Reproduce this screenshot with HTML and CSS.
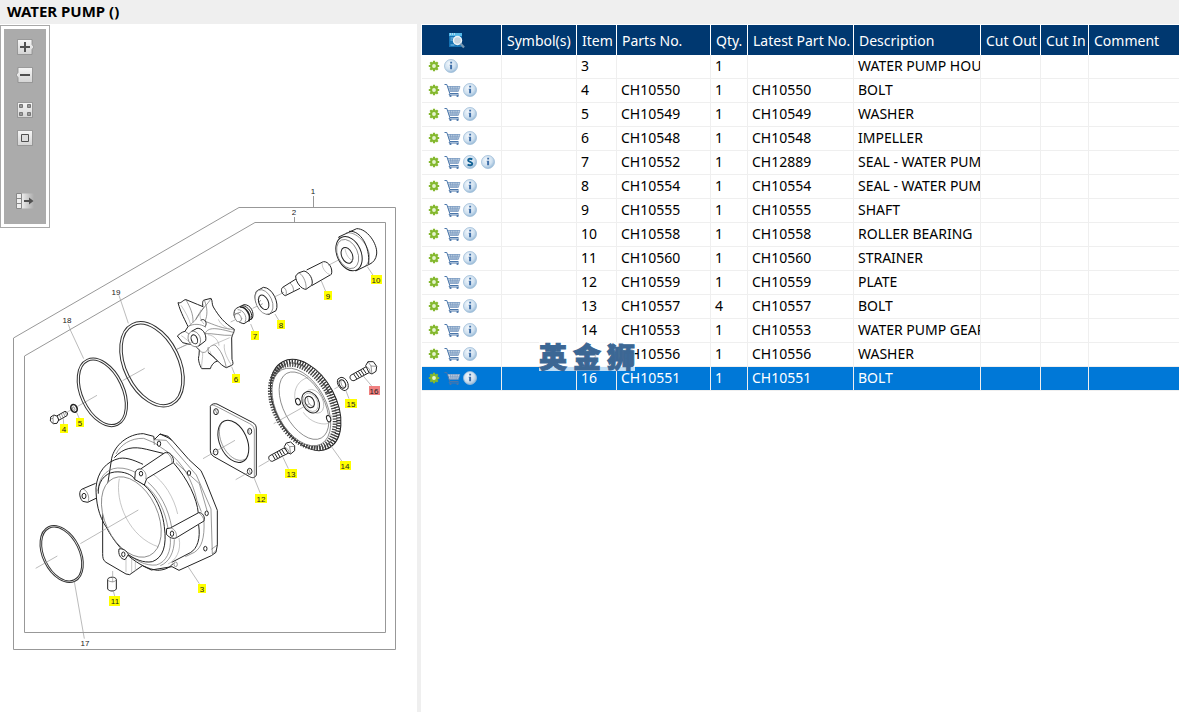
FILE: index.html
```html
<!DOCTYPE html>
<html lang="en">
<head>
<meta charset="utf-8">
<title>WATER PUMP ()</title>
<link rel="stylesheet" href="styles.css">
</head>
<body>
<svg class="sprite" aria-hidden="true">
  <defs>
    <linearGradient id="face" x1="0" y1="0" x2="0" y2="1"><stop offset="0" stop-color="#f6f6f6"/><stop offset="1" stop-color="#d4d4d4"/></linearGradient>
    <linearGradient id="fade" x1="0" y1="0" x2="1" y2="0"><stop offset="0" stop-color="#eeeeee"/><stop offset="1" stop-color="#ababab"/></linearGradient>
    <radialGradient id="disc" cx=".4" cy=".35" r=".7"><stop offset="0" stop-color="#f4f9fd"/><stop offset=".6" stop-color="#cfe0ef"/><stop offset="1" stop-color="#8fb4d4"/></radialGradient>
    <symbol id="gear" viewBox="0 0 12 12">
      <g stroke="#84b82e" stroke-width="2.2"><path d="M6 .8v10.400M.8 6h10.400M2.300 2.300l7.400 7.400M9.700 2.300l-7.400 7.400"/></g>
      <circle cx="6" cy="6" r="2.900" fill="#e6f4cf" stroke="#84b82e" stroke-width="2"/>
    </symbol>
    <symbol id="cart" viewBox="0 0 17 15">
      <path d="M3.500 3h12.500l-1.700 5.500H5z" fill="#d3deea"/>
      <path d="M.5 1.500h2.300l3 9h8.700M5.800 10.500l-.8 1.500h10" fill="none" stroke="#4a76aa" stroke-width="1"/>
      <path d="M3.500 3.500h12.500l-1.700 5H5.200M4 5.200h11.500M4.600 7h10.300M6.500 3.500l.6 5M8.700 3.500l.3 5M11 3.500v5M13.300 3.500l-.6 5" fill="none" stroke="#5f87b5" stroke-width=".6"/>
      <circle cx="6.500" cy="13" r="1.100" fill="#4a76aa"/><circle cx="13.500" cy="13" r="1.100" fill="#4a76aa"/>
    </symbol>
    <symbol id="info" viewBox="0 0 14 14">
      <circle cx="7" cy="7" r="6.500" fill="url(#disc)" stroke="#9dbcd8" stroke-width=".8"/>
      <path d="M6.200 2.800h1.900v1.700H6.200zM5.600 5.700h2.500v4.500h-2V6.600h-.5z" fill="#3f6fa8"/>
    </symbol>
    <symbol id="super" viewBox="0 0 14 14">
      <circle cx="7" cy="7" r="6.500" fill="url(#disc)" stroke="#9dbcd8" stroke-width=".8"/>
      <path d="M9.300 4.600C8 3.500 5.100 3.400 5.100 5.200c0 2 4.200 1.400 4.200 3.500 0 2-3.200 1.800-4.700.8" fill="none" stroke="#0f5f93" stroke-width="1.900"/>
    </symbol>
  </defs>
</svg>

<header class="titlebar"><h1 class="title">WATER PUMP ()</h1></header>

<main class="workspace">
  <section class="diagram" aria-label="Exploded view">
    <svg class="drawing" viewBox="0 24 417 688" role="img" aria-label="Water pump exploded diagram">
      <g class="frame">
        <path d="M13.500 338L239 207.500H395.500V649.500H13.500z"/>
        <path d="M24.500 356L255 222.500H385.500V632.500H24.500z"/>
        <path d="M313.500 196V207M294.500 217V222"/>
      </g>

      <g transform="translate(160 180) scale(.33333)">
        <g class="axis"><path d="M50 508L100 485M212 426L235 415M278 385L315 367M345 350L372 337M505 256L570 222M215 560L224 583M272 432L282 456M345 402L357 422M484 303L497 334M622 260L640 287"/></g>
        <g class="part">
          <path class="bold" d="M536 171L590 146C620 145 653 190 650 222C648 238 640 247 630 252L587 273z"/>
          <path d="M558 159C590 152 625 195 628 225C628 240 624 252 616 258"/>
          <path class="bold" d="M567 154C602 150 630 200 626 252"/>
          <ellipse class="bold" cx="567" cy="221" rx="36" ry="54" transform="rotate(-24 567 221)"/>
          <ellipse cx="563" cy="222" rx="30" ry="46" transform="rotate(-24 563 222)"/>
          <ellipse class="bold" cx="561" cy="226" rx="16" ry="25" transform="rotate(-24 561 226)"/>
          <path class="faint" d="M555 206C558 223 566 239 579 241"/>
          <path class="bold" d="M440 270L490 245C506 243 520 267 514 283L455 317"/>
          <path class="faint" d="M490 245C478 254 500 288 514 283"/>
          <path class="bold" d="M415 279L432 273C448 276 462 300 455 316L438 328C424 328 407 307 407 288z"/>
          <path d="M415 279C424 278 441 304 438 328"/>
          <path class="bold" d="M408 297L368 322C360 329 366 344 376 347L420 325"/>
          <path d="M368 322C377 322 383 338 376 347M390 309C398 316 402 325 400 335"/>
          <path class="bold" d="M290 333L310 322C338 322 359 371 348 392L327 403C302 402 274 358 290 333z"/>
          <ellipse cx="312" cy="366" rx="24" ry="39" transform="rotate(-24 312 366)"/>
          <ellipse class="bold" cx="311" cy="367" rx="14" ry="23" transform="rotate(-24 311 367)"/>
          <path d="M293 358L300 353M296 366L303 361M301 375L308 371"/>
          <path class="bold" d="M235 382L252 374C272 373 284 398 277 415L252 431C238 430 220 414 222 401C222 392 227 384 235 382z"/>
          <path class="heavy" d="M240 381C258 380 275 406 266 424"/>
          <path class="bold" d="M247 377C265 378 282 404 273 419"/>
          <path d="M233 389C248 388 264 409 255 426M225 402L243 396M229 423L247 416"/>
          <ellipse cx="234" cy="413" rx="9" ry="13" transform="rotate(-24 234 413)"/>
        </g>
        <g class="part">
          <path class="bold" d="M54 368C64 372 70 358 78 359L112 373L129 380C126 367 129 360 133 360L153 355C158 362 155 373 160 381C178 411 194 430 223 448C223 457 216 465 215 474L216 538C220 548 220 555 215 556L199 563C180 556 164 529 145 518L173 543C160 545 153 559 151 566L125 566C118 553 113 538 117 526L118 510C104 494 98 494 89 493L68 488L52 468C59 462 65 456 75 454L84 440C77 423 62 399 54 368z"/>
          <path d="M78 359C90 382 100 401 99 427M84 440C93 434 101 425 107 419L133 380M133 360C143 386 143 405 135 424M153 355C145 373 119 391 107 419M135 424C158 432 190 448 223 448M135 461C145 440 169 443 223 458M135 461C158 459 188 468 215 466M145 518C142 506 151 495 165 495C181 508 193 532 199 563M118 510C125 521 142 521 145 501M84 440C99 430 123 431 138 442M75 454L93 466"/>
          <path class="faint" d="M63 376C76 395 87 415 92 434M122 389C117 406 121 421 132 432M175 418C180 431 193 440 209 449M144 464C163 466 177 484 177 497M128 519C129 533 124 548 125 566M193 493C190 516 205 541 215 556M158 495L209 473M64 467C74 473 80 480 89 486M149 512C154 526 160 533 173 543"/>
          <path class="bold" d="M93 455L111 445C126 443 141 462 137 482L115 499"/>
          <ellipse cx="103" cy="477" rx="18" ry="24" transform="rotate(-22 103 477)"/>
          <ellipse class="bold" cx="103" cy="478" rx="9" ry="14" transform="rotate(-22 103 478)"/>
          <path class="bold" d="M122 421C133 413 144 428 135 440"/>
        </g>
      </g>

      <g transform="translate(0 280) scale(.33333)">
        <g class="axis"><path d="M205 133L211 150L251 236M357 46L385 130M202 396L218 387M233 379L291 346M368 302L434 265M530 208L580 184M190 415L191 434M230 397L238 416"/></g>
        <g class="ring">
          <ellipse cx="307" cy="337" rx="66" ry="109" transform="rotate(-25 307 337)"/>
          <ellipse cx="307" cy="337" rx="59" ry="103" transform="rotate(-25 307 337)"/>
          <ellipse cx="456" cy="253" rx="85" ry="136" transform="rotate(-26 456 253)"/>
          <ellipse cx="456" cy="253" rx="77" ry="129" transform="rotate(-26 456 253)"/>
        </g>
        <g class="part">
          <path class="bold" d="M170 408L195 394C202 395 205 402 201 407L176 421z"/>
          <path d="M178 405L183 416M184 401L189 412M190 398L195 409M195 395L200 406"/>
          <path class="bold" d="M152 411L162 405L172 409L176 420L171 430L160 431L151 423z"/>
          <path d="M162 405L159 415L160 431M159 415L151 417"/>
          <ellipse class="heavy" cx="222" cy="385" rx="9" ry="12" transform="rotate(-25 222 385)"/>
          <ellipse cx="221" cy="386" rx="3" ry="6" transform="rotate(-25 221 386)"/>
        </g>
      </g>

      <g transform="translate(200 340) scale(.33333)">
        <g class="part">
          <ellipse class="bold" cx="317" cy="195" rx="91" ry="147" transform="rotate(-28 317 195)"/>
          <ellipse class="teeth" cx="317" cy="195" rx="84" ry="140" transform="rotate(-28 317 195)"/>
          <ellipse class="teeth-wide" cx="308" cy="198" rx="84" ry="134" transform="rotate(-28 308 198)"/>
          <ellipse cx="304" cy="201" rx="74" ry="126" transform="rotate(-28 304 201)"/>
          <ellipse cx="312" cy="197" rx="61" ry="110" transform="rotate(-28 312 197)"/>
          <path class="faint" d="M285 178C280 146 296 120 325 112M310 217C325 239 349 252 375 252C389 251 394 240 393 225"/>
          <ellipse cx="343" cy="184" rx="25" ry="38" transform="rotate(-28 343 184)" class="faint"/>
          <ellipse class="bold" cx="332" cy="187" rx="24" ry="34" transform="rotate(-28 332 187)"/>
          <ellipse cx="332" cy="187" rx="20" ry="29" transform="rotate(-28 332 187)" class="faint"/>
          <ellipse class="bold" cx="329" cy="186" rx="13" ry="18" transform="rotate(-28 329 186)"/>
          <path d="M323 172C322 187 331 199 340 199"/>
          <ellipse class="bold" cx="294" cy="185" rx="7" ry="10" transform="rotate(-20 294 185)"/>
          <ellipse class="bold" cx="386" cy="236" rx="6" ry="10" transform="rotate(-20 386 236)"/>
          <path class="bold" d="M31 199C34 191 45 190 51 192L157 247C167 252 169 259 169 267V405C165 414 157 415 149 410L42 350C33 345 31 337 31 331z"/>
          <path d="M37 196C42 195 48 199 55 202L149 251C159 256 162 263 163 270V412"/>
          <ellipse class="bold" cx="100" cy="304" rx="41" ry="67" transform="rotate(-24 100 304)"/>
          <path d="M68 246C46 266 62 329 98 353C113 363 126 363 136 357"/>
          <ellipse class="bold" cx="48" cy="215" rx="7" ry="9"/><ellipse class="bold" cx="149" cy="274" rx="6" ry="9"/>
          <ellipse class="bold" cx="47" cy="336" rx="7" ry="9"/><ellipse class="bold" cx="149" cy="394" rx="7" ry="9"/>
          <path d="M46 209L51 222M147 268V280M147 388L151 400"/>
          <path class="bold" d="M208 348L252 324L266 339L217 364C209 364 203 355 208 348z"/>
          <path class="bold" d="M217 344L226 359M224 340L233 355M231 336L240 351M238 332L247 347M245 328L254 343"/>
          <path class="bold" d="M253 320L259 309L272 306L284 317V332L272 342L263 338z"/>
          <path d="M259 309L269 320L272 342M269 320L284 319M254 323C262 324 268 332 267 340"/>
          <path class="bold" d="M452 106L499 80L511 96L462 122C452 123 447 113 452 106z"/>
          <path class="bold" d="M461 102L471 117M468 98L478 113M475 94L485 109M482 90L492 105M489 86L499 101"/>
          <path class="bold" d="M497 77L504 65L520 65L530 79L528 94L516 102L507 98z"/>
          <path d="M504 65L513 78L516 102M513 78L530 79M498 81C507 82 512 91 509 99"/>
          <path class="bold" d="M414 117L423 112C440 112 449 135 443 147L435 152C420 150 407 130 414 117z"/>
          <ellipse class="bold" cx="427" cy="132" rx="9" ry="13" transform="rotate(-24 427 132)"/>
          <path d="M423 121C421 131 427 141 434 144"/>
        </g>
        <g class="axis"><path d="M9 356L105 301M107 419L142 399M176 380L207 362M221 251L330 190M403 147L415 140M162 413L181 460M249 352L265 386M393 318L426 364M437 150L447 176M488 106L515 138"/></g>
      </g>

      <g transform="translate(0 420) scale(.33333)">
        <g class="part">
          <path class="bold" d="M335 115C343 76 384 41 430 41L461 49L463 59L480 42L504 49L515 60L567 119L603 152L615 178L652 271V375L648 397L634 407L537 451L516 440L454 450L427 437L389 464L378 462L318 427C309 421 308 413 308 400V290z"/>
          <path class="bold" d="M480 42L504 53L515 60"/>
          <path d="M463 59L499 61L589 165L633 267L637 402M461 49L463 75M348 102C362 74 391 54 431 55L462 68L509 100M528 128L598 191L622 275M634 388L653 374M637 402L649 391M509 100C546 129 577 178 591 242L604 275M612 303C614 354 605 383 583 397L556 410"/>
          <path class="bold" d="M343 113C370 83 400 78 440 88L493 101M520 128C564 178 591 235 595 280M596 315C602 356 592 386 571 398L515 427"/>
          <path class="bold" d="M287 190L247 207C237 210 236 232 248 244L263 247L288 235"/>
          <path d="M247 207C260 207 272 233 263 247"/><ellipse class="bold" cx="252" cy="228" rx="6" ry="8"/>
          <path class="faint" d="M455 160C493 185 522 233 533 282M537 354C545 392 527 422 504 432M378 410V456M395 412V460M406 424V454"/>
          <path class="bold" d="M288 203C292 156 318 124 359 115C383 111 411 125 429 133M288 203C288 244 294 286 321 325C355 391 418 445 473 451C490 450 507 446 520 430"/>
          <path d="M294 213C295 178 316 146 353 144C375 143 395 151 408 158M433 193C475 225 496 276 504 325M511 354C514 393 499 427 469 435C435 438 409 422 384 402"/>
          <path class="bold" d="M295 221C292 192 311 159 344 156C370 153 398 164 404 178C448 194 486 256 493 320C501 378 489 413 457 425C430 430 404 417 381 402"/>
          <path d="M443 186C480 217 506 268 515 322M523 358C523 397 507 427 481 437"/>
          <ellipse cx="394" cy="291" rx="79" ry="128" transform="rotate(-25 394 291)"/>
          <path class="faint" d="M358 176C344 244 387 353 477 381"/>
          <path class="bold" d="M406 157C408 148 417 146 422 147L495 98C507 92 524 111 520 128L440 176L433 195L404 178z"/>
          <path d="M422 147C435 150 441 164 437 177M495 98C505 98 517 113 516 129"/>
          <ellipse class="bold" cx="423" cy="161" rx="5" ry="7"/>
          <path class="bold" d="M500 326L511 324L596 278C609 277 616 292 612 303L528 354C516 358 503 349 499 342z"/>
          <path d="M511 324C524 325 533 342 528 354M596 278C604 283 611 293 612 303"/>
          <ellipse class="bold" cx="516" cy="341" rx="5" ry="8"/>
          <path class="bold" d="M357 387C354 402 361 417 375 419L385 404C382 393 367 384 357 387z"/>
          <ellipse class="bold" cx="370" cy="403" rx="5" ry="7"/>
          <ellipse class="bold" cx="477" cy="71" rx="5" ry="8"/><ellipse class="bold" cx="567" cy="159" rx="5" ry="7"/>
          <ellipse class="bold" cx="620" cy="280" rx="5" ry="7"/><ellipse class="bold" cx="616" cy="386" rx="5" ry="7"/><ellipse cx="527" cy="433" rx="5" ry="7"/>
          <path class="bold" d="M323 478C325 470 347 469 349 478V507C345 515 327 515 323 507z"/>
          <path d="M323 480C329 487 344 487 349 480"/>
        </g>
        <g class="ring">
          <ellipse cx="185" cy="402" rx="57" ry="91" transform="rotate(-26 185 402)"/>
          <ellipse cx="185" cy="402" rx="52" ry="86" transform="rotate(-26 185 402)"/>
        </g>
        <g class="axis"><path d="M241 371L415 270M107 445L172 408M338 453V487M340 513L344 528M565 441L598 491M223 485L253 656"/></g>
      </g>

      <g class="tag-boxes">
        <rect x="371" y="275" width="11" height="9"/><rect x="324" y="291" width="8" height="9"/><rect x="277" y="320" width="8" height="9"/>
        <rect x="251" y="331" width="8" height="9"/><rect x="232" y="374" width="8" height="9"/><rect x="76" y="418" width="8" height="9"/>
        <rect x="60" y="424" width="8" height="9"/><rect x="345" y="399" width="12" height="9"/><rect x="340" y="461" width="11" height="9"/>
        <rect x="285" y="469" width="12" height="9"/><rect x="255" y="494" width="12" height="9"/><rect x="198" y="584" width="8" height="9"/>
        <rect x="109" y="596" width="11" height="10"/><rect class="picked" x="369" y="386" width="11" height="9"/>
      </g>
      <g class="tags">
        <text x="376" y="283">10</text><text x="328" y="299">9</text><text x="281" y="328">8</text><text x="255" y="339">7</text>
        <text x="236" y="382">6</text><text x="80" y="426">5</text><text x="64" y="432">4</text><text x="374" y="394">16</text>
        <text x="351" y="407">15</text><text x="345" y="469">14</text><text x="291" y="477">13</text><text x="261" y="502">12</text>
        <text x="202" y="592">3</text><text x="115" y="604">11</text><text x="313" y="194">1</text><text x="294" y="215">2</text>
        <text x="67" y="323">18</text><text x="116" y="295">19</text><text x="85" y="646">17</text>
      </g>
    </svg>

    <div class="toolbar" role="toolbar" aria-label="View tools">
      <div class="tools">
        <button class="tool" aria-label="Zoom in"><svg viewBox="0 0 18 16"><path d="M1.500 .5H16v5l2 2.500-2 2.500v5H1.500z" fill="url(#face)" stroke="#8c8c8c" stroke-width=".8"/><path d="M9 3v10M4 8h10" stroke="#505050" stroke-width="2"/></svg></button>
        <button class="tool" aria-label="Zoom out"><svg viewBox="0 0 18 16"><path d="M2 .5h14.500v15H2v-5L0 8l2-2.500z" fill="url(#face)" stroke="#8c8c8c" stroke-width=".8"/><path d="M4 8h10" stroke="#505050" stroke-width="2"/></svg></button>
        <button class="tool tool-spaced" aria-label="Fit all"><svg viewBox="0 0 18 16"><path d="M1.500 .5h15v15h-15z" fill="url(#face)" stroke="#8c8c8c" stroke-width=".8"/><path d="M3.500 2.500h3v3h-3zM11.500 2.500h3v3h-3zM3.500 10.500h3v3h-3zM11.500 10.500h3v3h-3z" fill="#999" stroke="#777"/></svg></button>
        <button class="tool" aria-label="Actual size"><svg viewBox="0 0 18 16"><path d="M1.500 .5h15v15h-15z" fill="url(#face)" stroke="#8c8c8c" stroke-width=".8"/><path d="M5.500 4.500h7v7h-7z" fill="#ddd" stroke="#505050"/></svg></button>
        <button class="tool tool-last" aria-label="Hide list"><svg viewBox="0 0 18 16"><path d="M5.500 .5H18v15H5.500z" fill="url(#fade)"/><path d="M.5 .5h5v15h-5z" fill="#eee"/><path d="M.5 .5h5v15h-5zM.5 5.500h5M.5 10.500h5" fill="none" stroke="#888"/><path d="M8 7h5V4.500L17.500 8 13 11.500V9H8z" fill="#505050"/></svg></button>
      </div>
    </div>
  </section>

  <section class="parts" aria-label="Parts list">
    <table class="grid">
      <colgroup><col class="w-icons"><col class="w-symbol"><col class="w-item"><col class="w-part"><col class="w-qty"><col class="w-latest"><col class="w-desc"><col class="w-out"><col class="w-in"><col></colgroup>
      <thead>
        <tr>
          <th class="search-head"><button class="search" aria-label="Search list"><svg viewBox="0 0 16 16"><path d="M0 0h13v3H0z" fill="#55b8e8"/><path d="M1 1h1M3 1h1M5 1h1" stroke="#fff"/><path d="M0 3h13v11H0z" fill="#1673b4"/><path d="M1.500 5h4M1.500 7h2M1.500 12h4" stroke="#8ecbed"/><circle cx="8.500" cy="7.500" r="4" fill="#c4d3df" stroke="#eef4f8" stroke-width="1.500"/><path d="M11.500 10.500l3.500 4" stroke="#7897b1" stroke-width="2.200"/></svg></button></th>
          <th>Symbol(s)</th><th>Item</th><th>Parts No.</th><th>Qty.</th><th>Latest Part No.</th><th>Description</th><th>Cut Out</th><th>Cut In</th><th>Comment</th>
        </tr>
      </thead>
      <tbody>
        <tr><td><div class="icons"><svg class="gear"><use href="#gear"/></svg><svg class="disc"><use href="#info"/></svg></div></td><td></td><td>3</td><td></td><td>1</td><td></td><td>WATER PUMP HOUSING</td><td></td><td></td><td></td></tr>
        <tr><td><div class="icons"><svg class="gear"><use href="#gear"/></svg><svg class="cart"><use href="#cart"/></svg><svg class="disc"><use href="#info"/></svg></div></td><td></td><td>4</td><td>CH10550</td><td>1</td><td>CH10550</td><td>BOLT</td><td></td><td></td><td></td></tr>
        <tr><td><div class="icons"><svg class="gear"><use href="#gear"/></svg><svg class="cart"><use href="#cart"/></svg><svg class="disc"><use href="#info"/></svg></div></td><td></td><td>5</td><td>CH10549</td><td>1</td><td>CH10549</td><td>WASHER</td><td></td><td></td><td></td></tr>
        <tr><td><div class="icons"><svg class="gear"><use href="#gear"/></svg><svg class="cart"><use href="#cart"/></svg><svg class="disc"><use href="#info"/></svg></div></td><td></td><td>6</td><td>CH10548</td><td>1</td><td>CH10548</td><td>IMPELLER</td><td></td><td></td><td></td></tr>
        <tr><td><div class="icons"><svg class="gear"><use href="#gear"/></svg><svg class="cart"><use href="#cart"/></svg><svg class="disc"><use href="#super"/></svg><svg class="disc disc-next"><use href="#info"/></svg></div></td><td></td><td>7</td><td>CH10552</td><td>1</td><td>CH12889</td><td>SEAL - WATER PUMP</td><td></td><td></td><td></td></tr>
        <tr><td><div class="icons"><svg class="gear"><use href="#gear"/></svg><svg class="cart"><use href="#cart"/></svg><svg class="disc"><use href="#info"/></svg></div></td><td></td><td>8</td><td>CH10554</td><td>1</td><td>CH10554</td><td>SEAL - WATER PUMP</td><td></td><td></td><td></td></tr>
        <tr><td><div class="icons"><svg class="gear"><use href="#gear"/></svg><svg class="cart"><use href="#cart"/></svg><svg class="disc"><use href="#info"/></svg></div></td><td></td><td>9</td><td>CH10555</td><td>1</td><td>CH10555</td><td>SHAFT</td><td></td><td></td><td></td></tr>
        <tr><td><div class="icons"><svg class="gear"><use href="#gear"/></svg><svg class="cart"><use href="#cart"/></svg><svg class="disc"><use href="#info"/></svg></div></td><td></td><td>10</td><td>CH10558</td><td>1</td><td>CH10558</td><td>ROLLER BEARING</td><td></td><td></td><td></td></tr>
        <tr><td><div class="icons"><svg class="gear"><use href="#gear"/></svg><svg class="cart"><use href="#cart"/></svg><svg class="disc"><use href="#info"/></svg></div></td><td></td><td>11</td><td>CH10560</td><td>1</td><td>CH10560</td><td>STRAINER</td><td></td><td></td><td></td></tr>
        <tr><td><div class="icons"><svg class="gear"><use href="#gear"/></svg><svg class="cart"><use href="#cart"/></svg><svg class="disc"><use href="#info"/></svg></div></td><td></td><td>12</td><td>CH10559</td><td>1</td><td>CH10559</td><td>PLATE</td><td></td><td></td><td></td></tr>
        <tr><td><div class="icons"><svg class="gear"><use href="#gear"/></svg><svg class="cart"><use href="#cart"/></svg><svg class="disc"><use href="#info"/></svg></div></td><td></td><td>13</td><td>CH10557</td><td>4</td><td>CH10557</td><td>BOLT</td><td></td><td></td><td></td></tr>
        <tr><td><div class="icons"><svg class="gear"><use href="#gear"/></svg><svg class="cart"><use href="#cart"/></svg><svg class="disc"><use href="#info"/></svg></div></td><td></td><td>14</td><td>CH10553</td><td>1</td><td>CH10553</td><td>WATER PUMP GEAR</td><td></td><td></td><td></td></tr>
        <tr><td><div class="icons"><svg class="gear"><use href="#gear"/></svg><svg class="cart"><use href="#cart"/></svg><svg class="disc"><use href="#info"/></svg></div></td><td></td><td>15</td><td>CH10556</td><td>1</td><td>CH10556</td><td>WASHER</td><td></td><td></td><td></td></tr>
        <tr class="selected"><td><div class="icons"><svg class="gear"><use href="#gear"/></svg><svg class="cart"><use href="#cart"/></svg><svg class="disc"><use href="#info"/></svg></div></td><td></td><td>16</td><td>CH10551</td><td>1</td><td>CH10551</td><td>BOLT</td><td></td><td></td><td></td></tr>
      </tbody>
    </table>
    <div class="watermark" lang="zh"><span>英</span><span>金</span><span>狮</span></div>
  </section>
</main>
</body>
</html>
```
FILE: styles.css
```css
* { box-sizing: border-box; }

body {
  margin: 0;
  min-height: 100vh;
  display: flex;
  flex-direction: column;
  background: #efefef;
  color: #000;
  font-family: "Noto Sans", "Open Sans", sans-serif;
  font-size: 14px;
}

button {
  padding: 0;
  border: 0;
  background: none;
  cursor: pointer;
}

svg { display: block; }

.sprite {
  position: absolute;
  width: 0;
  height: 0;
}

.titlebar {
  height: 24px;
  padding-left: 7px;
}

.title {
  margin: 0;
  font-size: 15px;
  line-height: 23px;
  font-weight: 700;
}

.workspace {
  flex: 1;
  display: grid;
  grid-template-columns: minmax(0, 417fr) minmax(0, 758fr);
  gap: 4px;
}

/* Diagram pane */

.diagram {
  position: relative;
  background: #fff;
}

.drawing {
  width: 100%;
  height: auto;
}

.frame { fill: none; stroke: #989898; stroke-width: 1; }
.axis { fill: none; stroke: #999; stroke-width: 2; }
.part { fill: #fff; stroke: #666; stroke-width: 2; stroke-linejoin: round; }
.part path { fill: none; }
.part path.bold[d$="z"] { fill: #fff; }
.part .bold { stroke: #222; stroke-width: 3; }
.part .heavy { stroke: #222; stroke-width: 5; }
.part .faint { fill: none; stroke: #aaa; }
.ring { fill: none; stroke: #333; stroke-width: 3; }
.part .teeth { stroke: #333; stroke-width: 14; stroke-dasharray: 4 4; }
.part .teeth-wide { fill: none; stroke: #444; stroke-width: 14; stroke-dasharray: 4 4; }
.tag-boxes { fill: #ff0; }
.tag-boxes .picked { fill: #f08080; }
.tags {
  font-family: "Liberation Sans", Arial, sans-serif;
  font-size: 8px;
  text-anchor: middle;
  fill: #222;
}

.toolbar {
  position: absolute;
  top: 1px;
  left: 0;
  width: 50px;
  padding: 3px;
  border: 1px solid #a9a9a9;
  background: #fff;
}

.tools {
  display: flex;
  flex-direction: column;
  align-items: center;
  gap: 12px;
  padding: 10px 0 15px;
  background: #ababab;
}

.tool { width: 18px; height: 16px; }
.tool svg { width: 18px; height: 16px; }
.tool-spaced { margin-top: 7px; }
.tool-last { margin-top: 35px; }

/* Parts list */

.parts {
  position: relative;
  padding: 1px 0 0 1px;
  background: #fff;
}

.grid {
  width: 100%;
  table-layout: fixed;
  border-collapse: separate;
  border-spacing: 0;
}

.w-icons { width: 80px; }
.w-symbol { width: 75px; }
.w-item { width: 40px; }
.w-part { width: 94px; }
.w-qty { width: 37px; }
.w-latest { width: 106px; }
.w-desc { width: 127px; }
.w-out { width: 60px; }
.w-in { width: 48px; }

.grid th {
  height: 30px;
  padding: 2px 0 0 5px;
  border-right: 1px solid #fff;
  background: #003870;
  color: #fff;
  font-weight: 400;
  line-height: 20px;
  text-align: left;
  white-space: nowrap;
}

.grid td {
  height: 24px;
  padding: 0 0 1px 4px;
  border-right: 1px solid #efefef;
  border-bottom: 1px solid #efefef;
  line-height: 20px;
  white-space: nowrap;
  overflow: hidden;
}

.grid th:last-child,
.grid td:last-child { border-right: 0; }

.search-head { vertical-align: middle; }
.search { display: block; margin-left: 22px; }
.search svg { width: 16px; height: 16px; }

.icons {
  display: flex;
  align-items: center;
  gap: 2px;
  padding-left: 2px;
}

.gear { width: 12px; height: 12px; margin-right: 2px; }
.cart { width: 17px; height: 15px; }
.disc { width: 14px; height: 14px; }
.disc-next { margin-left: 2px; }

.selected td {
  background: #0078d7;
  color: #fff;
}

/* Watermark floats over the list */

.watermark {
  position: absolute;
  top: 318px;
  left: 118px;
  display: flex;
  gap: 6px;
  background: rgba(255, 255, 255, .75);
  color: #3c6794;
  font-family: "Noto Sans CJK SC", sans-serif;
  font-size: 28px;
  font-weight: 900;
  line-height: 29px;
  -webkit-text-stroke: 1px #3c6794;
}
```
